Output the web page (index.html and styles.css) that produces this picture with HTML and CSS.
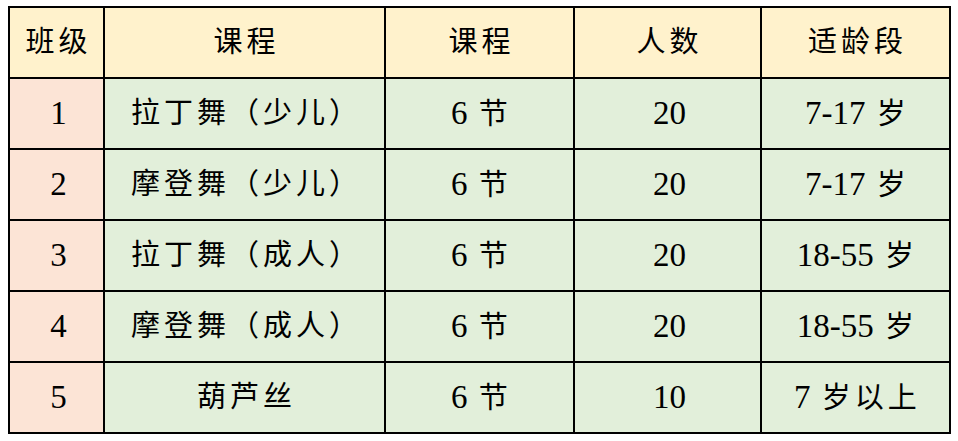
FILE: index.html
```html
<!DOCTYPE html>
<html lang="zh">
<head>
<meta charset="utf-8">
<link rel="stylesheet" href="styles.css">
</head>
<body>
<table class="sched">
  <colgroup>
    <col class="c1"><col class="c2"><col class="c3"><col class="c4"><col class="c5">
  </colgroup>
  <thead>
    <tr class="head"><th>班级</th><th>课程</th><th>课程</th><th>人数</th><th>适龄段</th></tr>
  </thead>
  <tbody>
    <tr><td class="idx"><span class="n">1</span></td><td>拉丁舞（少儿）</td><td><span class="n">6</span> 节</td><td><span class="n">20</span></td><td><span class="n">7-17</span> 岁</td></tr>
    <tr><td class="idx"><span class="n">2</span></td><td>摩登舞（少儿）</td><td><span class="n">6</span> 节</td><td><span class="n">20</span></td><td><span class="n">7-17</span> 岁</td></tr>
    <tr><td class="idx"><span class="n">3</span></td><td>拉丁舞（成人）</td><td><span class="n">6</span> 节</td><td><span class="n">20</span></td><td><span class="n">18-55</span> 岁</td></tr>
    <tr><td class="idx"><span class="n">4</span></td><td>摩登舞（成人）</td><td><span class="n">6</span> 节</td><td><span class="n">20</span></td><td><span class="n">18-55</span> 岁</td></tr>
    <tr><td class="idx"><span class="n">5</span></td><td>葫芦丝</td><td><span class="n">6</span> 节</td><td><span class="n">10</span></td><td><span class="n">7</span> 岁以上</td></tr>
  </tbody>
</table>
</body>
</html>
```
FILE: styles.css
```css
html, body {
  margin: 0;
  padding: 0;
  background: #ffffff;
}
body {
  padding: 6px 0 0 8px;
}
.sched {
  border-collapse: collapse;
  table-layout: fixed;
  width: 943px;
  font-family: "Liberation Serif", "Noto Sans CJK SC", serif;
  font-size: 29px;
  color: #000;
}
.c1 { width: 95px; }
.c2 { width: 281px; }
.c3 { width: 189px; }
.c4 { width: 187px; }
.c5 { width: 189px; }
.sched th, .sched td {
  border: 2px solid #000;
  height: 69px;
  padding: 0 0 0 4px;
  text-align: center;
  vertical-align: middle;
  font-weight: normal;
  letter-spacing: 4px;
  background: #e2efda;
  line-height: 1;
}
.sched .head th {
  background: #fff2cc;
}
.sched td.idx {
  background: #fce4d6;
}
.n {
  font-size: 33px;
  letter-spacing: 0;
}
```
